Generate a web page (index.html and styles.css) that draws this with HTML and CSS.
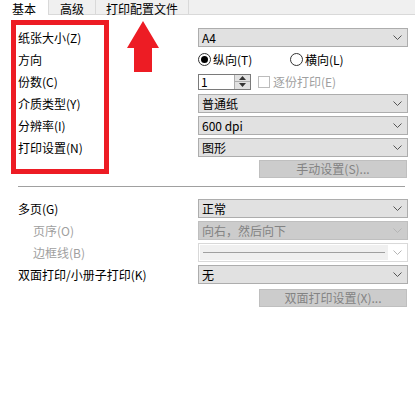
FILE: index.html
```html
<!DOCTYPE html>
<html lang="zh-CN">
<head>
    <meta charset="UTF-8">
    <title>打印首选项</title>
    <link rel="stylesheet" href="styles.css">
</head>
<body>

    <!-- Tabs -->
    <div class="tabs">
        <div class="tab tab-basic active">基本</div>
        <div class="tab tab-adv">高级</div>
        <div class="tab tab-profile">打印配置文件</div>
    </div>

    <!-- Basic settings -->
    <div class="page">
        <div class="row">
            <span class="label">纸张大小(Z)</span>
            <div class="select"><span>A4</span><svg class="chev" width="9" height="5"><polyline points="0.5,0.5 4.5,4.5 8.5,0.5"/></svg></div>
        </div>
        <div class="row">
            <span class="label">方向</span>
            <div class="radios">
                <span class="radio-item first"><span class="radio checked"></span>纵向(T)</span>
                <span class="radio-item"><span class="radio"></span>横向(L)</span>
            </div>
        </div>
        <div class="row">
            <span class="label">份数(C)</span>
            <div class="copies">
                <div class="spin">
                    <span class="spin-value">1</span>
                    <div class="spin-btns">
                        <svg width="7" height="4"><polygon points="3.5,0 7,4 0,4"/></svg>
                        <span class="spin-div"></span>
                        <svg width="7" height="4"><polygon points="0,0 7,0 3.5,4"/></svg>
                    </div>
                </div>
                <span class="check"></span>
                <span class="muted">逐份打印(E)</span>
            </div>
        </div>
        <div class="row">
            <span class="label">介质类型(Y)</span>
            <div class="select"><span>普通纸</span><svg class="chev" width="9" height="5"><polyline points="0.5,0.5 4.5,4.5 8.5,0.5"/></svg></div>
        </div>
        <div class="row">
            <span class="label">分辨率(I)</span>
            <div class="select"><span>600 dpi</span><svg class="chev" width="9" height="5"><polyline points="0.5,0.5 4.5,4.5 8.5,0.5"/></svg></div>
        </div>
        <div class="row">
            <span class="label">打印设置(N)</span>
            <div class="select"><span>图形</span><svg class="chev" width="9" height="5"><polyline points="0.5,0.5 4.5,4.5 8.5,0.5"/></svg></div>
        </div>
        <div class="btn-row first-btn">
            <div class="btn">手动设置(S)...</div>
        </div>

        <div class="separator"></div>

        <div class="row">
            <span class="label">多页(G)</span>
            <div class="select"><span>正常</span><svg class="chev" width="9" height="5"><polyline points="0.5,0.5 4.5,4.5 8.5,0.5"/></svg></div>
        </div>
        <div class="row">
            <span class="label sub muted">页序(O)</span>
            <div class="select disabled"><span>向右，然后向下</span><svg class="chev" width="9" height="5"><polyline points="0.5,0.5 4.5,4.5 8.5,0.5"/></svg></div>
        </div>
        <div class="row">
            <span class="label sub muted">边框线(B)</span>
            <div class="select lines"><span class="line-box"><span class="line"></span></span><svg class="chev" width="9" height="5"><polyline points="0.5,0.5 4.5,4.5 8.5,0.5"/></svg></div>
        </div>
        <div class="row">
            <span class="label">双面打印/小册子打印(K)</span>
            <div class="select"><span>无</span><svg class="chev" width="9" height="5"><polyline points="0.5,0.5 4.5,4.5 8.5,0.5"/></svg></div>
        </div>
        <div class="btn-row">
            <div class="btn">双面打印设置(X)...</div>
        </div>
    </div>

    <!-- Annotation -->
    <div class="mark-box"></div>
    <svg class="mark-arrow" width="32" height="51"><polygon points="16,0 32,27 25,27 25,51 7,51 7,27 0,27"/></svg>

</body>
</html>
```

FILE: styles.css
```css
/* General */
body {
    margin: 0;
    background: #ffffff;
    color: #000;
    font-family: "Noto Sans CJK SC", sans-serif;
    font-size: 12px;
    position: relative;
    width: 415px;
    height: 393px;
    overflow: hidden;
}

/* Tabs */
.tabs {
    display: flex;
    height: 14px;
    background: #f0f0f0;
    border-bottom: 1px solid #d9d9d9;
}
.tab {
    height: 14px;
    padding-top: 2px;
    line-height: 14px;
    text-align: center;
    border-right: 1px solid #d9d9d9;
    box-sizing: border-box;
}
.tab.active {
    background: #ffffff;
    height: 15px;
}
.tab-basic { width: 49px; }
.tab-adv { width: 47px; }
.tab-profile { width: 93px; }

/* Form */
.page {
    padding: 13px 0 0 18px;
}
.row {
    display: flex;
    align-items: center;
    height: 19px;
    margin-bottom: 3px;
}
.label {
    width: 180px;
    flex-shrink: 0;
    line-height: 19px;
}
.label.sub {
    padding-left: 15px;
    box-sizing: border-box;
}
.muted {
    color: #a0a0a0;
}

/* Dropdowns */
.select {
    width: 210px;
    height: 19px;
    box-sizing: border-box;
    border: 1px solid #adadad;
    background: #e1e1e1;
    display: flex;
    align-items: center;
    justify-content: space-between;
    padding: 0 5px 0 3px;
    line-height: 17px;
}
.chev polyline {
    fill: none;
    stroke: #555;
    stroke-width: 1;
}
.select.disabled {
    background: #cccccc;
    border-color: #bfbfbf;
    color: #838383;
}
.select.disabled .chev polyline,
.select.lines .chev polyline {
    stroke: #b5b5b5;
}
.select.lines {
    background: #ffffff;
    border-color: #d9d9d9;
    padding-left: 1px;
}
.line-box {
    width: 188px;
    height: 15px;
    background: #f0f0f0;
    display: flex;
    align-items: center;
    padding: 0 3px;
    box-sizing: border-box;
}
.line {
    flex: 1;
    height: 1px;
    background: #a0a0a0;
}

/* Radios */
.radios {
    display: flex;
    align-items: center;
}
.radio-item {
    display: flex;
    align-items: center;
}
.radio-item.first {
    width: 92px;
}
.radio {
    width: 13px;
    height: 13px;
    box-sizing: border-box;
    border: 1px solid #333;
    border-radius: 50%;
    margin-right: 2px;
    display: flex;
    align-items: center;
    justify-content: center;
}
.radio.checked::after {
    content: "";
    width: 7px;
    height: 7px;
    border-radius: 50%;
    background: #000;
}

/* Copies */
.copies {
    display: flex;
    align-items: center;
}
.spin {
    width: 53px;
    height: 16px;
    box-sizing: border-box;
    border: 1px solid #7a7a7a;
    display: flex;
    align-items: center;
    justify-content: space-between;
}
.spin-value {
    padding-left: 2px;
    line-height: 14px;
}
.spin-btns {
    width: 16px;
    height: 14px;
    box-sizing: border-box;
    border-left: 1px solid #adadad;
    background: #e1e1e1;
    display: flex;
    flex-direction: column;
    align-items: center;
    justify-content: space-evenly;
}
.spin-btns polygon {
    fill: #333;
}
.spin-div {
    width: 100%;
    height: 1px;
    background: #adadad;
}
.check {
    width: 12px;
    height: 12px;
    box-sizing: border-box;
    border: 1px solid #bcbcbc;
    margin: 0 3px 0 7px;
}

/* Buttons */
.btn-row {
    display: flex;
    padding-left: 241px;
    margin-top: 5px;
}
.btn-row.first-btn {
    margin-top: 3px;
}
.btn {
    width: 148px;
    height: 18px;
    box-sizing: border-box;
    border: 1px solid #bfbfbf;
    background: #cccccc;
    color: #838383;
    text-align: center;
    line-height: 16px;
}

.separator {
    width: 387px;
    height: 1px;
    background: #a0a0a0;
    margin: 8px 0 12px;
}

/* Red annotation */
.mark-box {
    position: absolute;
    left: 11px;
    top: 20px;
    width: 98px;
    height: 154px;
    box-sizing: border-box;
    border: 5px solid #ed1c24;
}
.mark-arrow {
    position: absolute;
    left: 127px;
    top: 21px;
}
.mark-arrow polygon {
    fill: #ed1c24;
}
```
